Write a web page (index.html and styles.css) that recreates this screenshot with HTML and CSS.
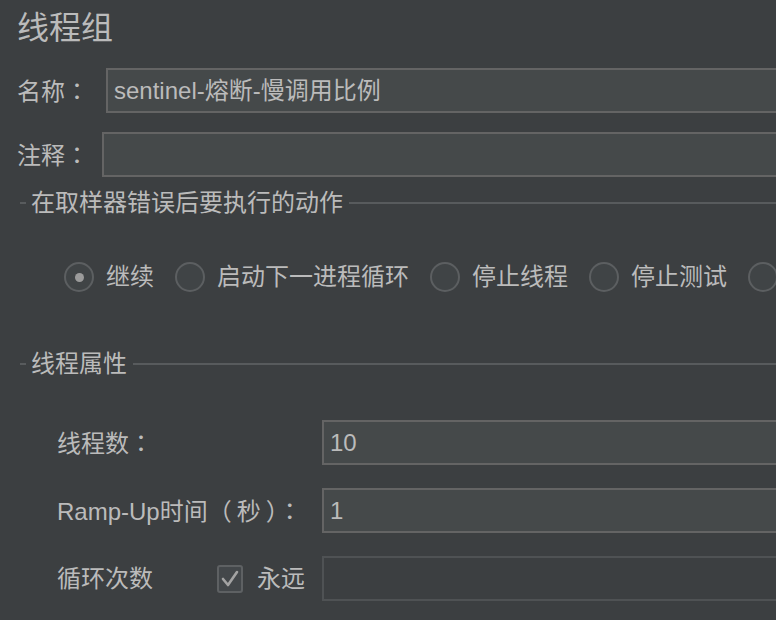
FILE: index.html
```html
<!DOCTYPE html>
<html lang="zh-CN">
<head>
<meta charset="utf-8">
<title>线程组</title>
<link rel="stylesheet" href="styles.css">
</head>
<body>
<div class="page">
  <div class="title">线程组</div>

  <div class="row row-name">
    <span class="label">名称<span class="punct" lang="zh-Hant-TW">：</span></span>
    <div class="field field-name">sentinel-熔断-慢调用比例</div>
  </div>

  <div class="row row-comment">
    <span class="label">注释<span class="punct" lang="zh-Hant-TW">：</span></span>
    <div class="field field-comment"></div>
  </div>

  <div class="section section-error">
    <span class="dash"></span>
    <span class="legend">在取样器错误后要执行的动作</span>
    <span class="line"></span>
  </div>

  <div class="radios">
    <span class="radio checked"><span class="dot"></span></span><span class="radio-text">继续</span>
    <span class="radio"></span><span class="radio-text">启动下一进程循环</span>
    <span class="radio"></span><span class="radio-text">停止线程</span>
    <span class="radio"></span><span class="radio-text">停止测试</span>
    <span class="radio"></span>
  </div>

  <div class="section section-props">
    <span class="dash"></span>
    <span class="legend">线程属性</span>
    <span class="line"></span>
  </div>

  <div class="prop-row prop-first">
    <span class="prop-label">线程数<span class="punct" lang="zh-Hant-TW">：</span></span>
    <div class="field">10</div>
  </div>

  <div class="prop-row">
    <span class="prop-label">Ramp-Up时间<span class="punct paren-open" lang="zh-Hant-TW">（</span>秒<span class="punct paren-close" lang="zh-Hant-TW">）</span><span class="punct" lang="zh-Hant-TW">：</span></span>
    <div class="field">1</div>
  </div>

  <div class="prop-row">
    <span class="prop-label prop-label-short">循环次数</span>
    <span class="checkbox">
      <svg width="20" height="20" viewBox="0 0 20 20"><polyline points="3,10 8,16 17,3" fill="none" stroke="#a3a3a3" stroke-width="2.6" stroke-linecap="round" stroke-linejoin="round"/></svg>
    </span>
    <span class="check-text">永远</span>
    <div class="field field-disabled"></div>
  </div>
</div>
</body>
</html>
```

FILE: styles.css
```css
html, body {
  margin: 0;
  padding: 0;
  overflow: hidden;
}

body {
  background: #3c3f41;
  color: #bbbbbb;
  font-family: "Liberation Sans", "Noto Sans CJK SC", sans-serif;
  font-size: 24px;
  width: 776px;
  height: 620px;
}

.page {
  padding-left: 17px;
}

.title {
  margin-top: 12px;
  height: 32px;
  line-height: 32px;
  font-size: 32px;
}

.punct {
  font-family: "Noto Sans CJK TC", "Noto Sans CJK JP", sans-serif;
}

.paren-open {
  padding-right: 5px;
}

.paren-close {
  padding-left: 5px;
}

.row {
  display: flex;
  align-items: center;
  height: 45px;
  margin-right: -30px;
}

.row-name {
  margin-top: 24px;
}

.row-comment {
  margin-top: 19px;
}

.label {
  flex: none;
  width: 72px;
  white-space: nowrap;
  line-height: 24px;
}

.row-name .label {
  margin-right: 17px;
}

.row-comment .label {
  margin-right: 13px;
}

.field {
  flex: 1;
  height: 45px;
  box-sizing: border-box;
  border: 2px solid #646464;
  background: #45494a;
  padding-left: 6px;
  line-height: 41px;
  white-space: nowrap;
  overflow: hidden;
}

.field-disabled {
  background: #3c3f41;
  border-color: #4f5254;
}

.section {
  display: flex;
  align-items: center;
  height: 24px;
  margin-left: 3px;
  margin-right: -30px;
}

.section-error {
  margin-top: 14px;
}

.section-props {
  margin-top: 60px;
}

.dash {
  width: 6px;
  height: 2px;
  background: #585b5d;
}

.legend {
  padding: 0 6px 0 5px;
  line-height: 24px;
  white-space: nowrap;
}

.line {
  flex: 1;
  height: 2px;
  background: #585b5d;
}

.radios {
  display: flex;
  align-items: center;
  height: 30px;
  margin-top: 47px;
  margin-left: 47px;
  white-space: nowrap;
}

.radio {
  flex: none;
  width: 30px;
  height: 30px;
  box-sizing: border-box;
  border: 2px solid #5c5f61;
  border-radius: 50%;
  background: #404446;
  display: flex;
  align-items: center;
  justify-content: center;
  margin-right: 12px;
}

.dot {
  width: 9px;
  height: 9px;
  border-radius: 50%;
  background: #9b9b9b;
}

.radio-text {
  flex: none;
  margin-right: 21px;
  line-height: 30px;
}

.prop-row {
  display: flex;
  align-items: center;
  height: 45px;
  margin-top: 23px;
  margin-left: 40px;
  margin-right: -30px;
}

.prop-first {
  margin-top: 44px;
}

.prop-label {
  width: 265px;
  flex: none;
  white-space: nowrap;
  line-height: 24px;
}

.prop-label-short {
  width: 160px;
}

.checkbox {
  flex: none;
  width: 26px;
  height: 28px;
  box-sizing: border-box;
  border: 2px solid #5e6163;
  border-radius: 3px;
  background: #43474a;
  display: flex;
  align-items: center;
  justify-content: center;
  margin-right: 14px;
}

.checkbox svg {
  display: block;
}

.check-text {
  flex: none;
  width: 48px;
  margin-right: 17px;
  line-height: 24px;
  white-space: nowrap;
}
```
